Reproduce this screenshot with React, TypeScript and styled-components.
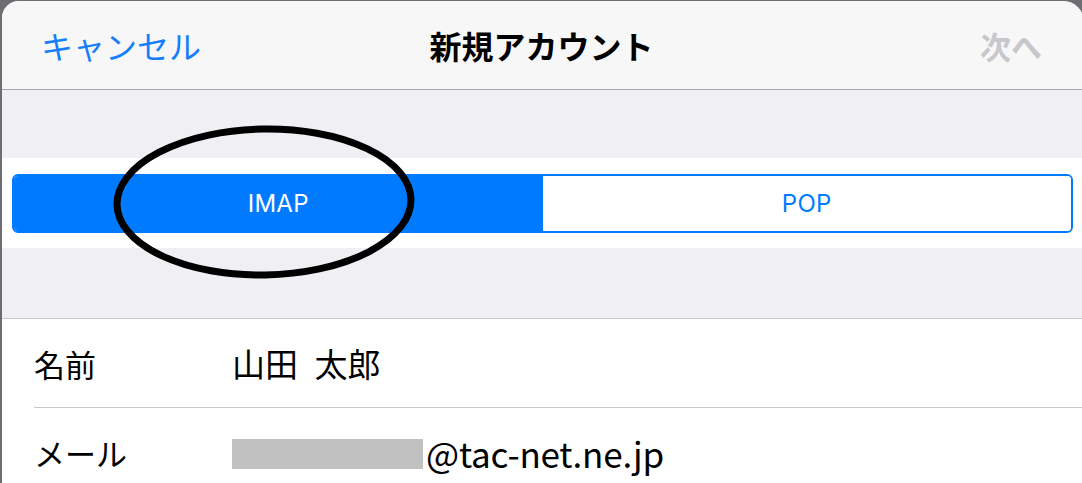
import styled, { createGlobalStyle } from 'styled-components';

const GlobalStyle = createGlobalStyle`
	html, body {
		margin: 0;
		padding: 0;
		background: #6d6d72;
		overflow: hidden;
	}
	#root {
		padding: 1px 0 0 2px;
	}
`;

const JP = `'Noto Sans CJK JP', 'Noto Sans', sans-serif`;

const Sheet = styled.div`
	position: relative;
	width: 1082px;
	height: 482px;
	overflow: hidden;
	background: #efeff4;
	border-radius: 17px 21px 0 0;
	font-family: ${JP};
`;

const Header = styled.header`
	height: 88px;
	background: #f7f7f8;
	border-bottom: 1px solid #a9a9ad;
	display: grid;
	grid-template-columns: 1fr auto 1fr;
	align-items: center;
	padding: 0 42px 0 39px;
	.cancel {
		color: #147efb;
		font-size: 32px;
		justify-self: start;
	}
	.title {
		color: #000;
		font-size: 32px;
		font-weight: 700;
	}
	.next {
		color: #c7c7cc;
		font-size: 31px;
		font-weight: 700;
		justify-self: end;
	}
`;

const Gap = styled.div<{ $h: number; $line?: boolean }>`
	height: ${(p) => p.$h}px;
	border-bottom: ${(p) => (p.$line ? '1px solid #c8c7cc' : 'none')};
`;

const SegmentBand = styled.div`
	background: #fff;
	padding: 16px 11px 15px 10px;
`;

const Segmented = styled.div`
	display: grid;
	grid-template-columns: 1fr 1fr;
	height: 59px;
	border: 2px solid #007aff;
	border-radius: 6px;
	overflow: hidden;
	box-sizing: border-box;
`;

const Segment = styled.div<{ $active?: boolean }>`
	display: flex;
	align-items: center;
	justify-content: center;
	background: ${(p) => (p.$active ? '#007aff' : '#fff')};
	color: ${(p) => (p.$active ? '#fff' : '#007aff')};
	font-family: Inter, 'Noto Sans', sans-serif;
	font-size: 24px;
	letter-spacing: 0.3px;
`;

const List = styled.div`
	background: #fff;
	padding-left: 32px;
`;

const Row = styled.div`
	display: grid;
	grid-template-columns: 198px 1fr;
	align-items: center;
	height: 88px;
	border-bottom: 1px solid #c8c7cc;
	&:last-child {
		border-bottom: none;
	}
	.label {
		color: #000;
		font-size: 31px;
	}
	.value {
		color: #000;
		font-size: 33px;
		display: flex;
		align-items: center;
		word-spacing: 9px;
	}
	.mail {
		font-size: 35px;
		letter-spacing: -0.2px;
		word-spacing: 0;
	}
`;

const Redacted = styled.span`
	display: inline-block;
	width: 191px;
	height: 30px;
	background: #c1c1c1;
	margin: 4px 3px 0 0;
`;

const Mark = styled.svg`
	position: absolute;
	left: 110px;
	top: 124px;
`;

export default function App() {
	return (
		<>
			<GlobalStyle />
			<Sheet>
				<Header>
					<span className="cancel">キャンセル</span>
					<span className="title">新規アカウント</span>
					<span className="next">次へ</span>
				</Header>
				<Gap $h={68} />
				<SegmentBand>
					<Segmented>
						<Segment $active>IMAP</Segment>
						<Segment>POP</Segment>
					</Segmented>
				</SegmentBand>
				<Gap $h={70} $line />
				<List>
					<Row>
						<span className="label">名前</span>
						<span className="value">山田 太郎</span>
					</Row>
					<Row>
						<span className="label">メール</span>
						<span className="value">
							<Redacted />
							<span className="mail">@tac-net.ne.jp</span>
						</span>
					</Row>
				</List>
				<Mark width="306" height="156" viewBox="0 0 306 156">
					<ellipse
						cx="152"
						cy="77"
						rx="147"
						ry="73"
						fill="none"
						stroke="#000"
						strokeWidth="7"
						transform="rotate(-1 152 77)"
					/>
				</Mark>
			</Sheet>
		</>
	);
}
